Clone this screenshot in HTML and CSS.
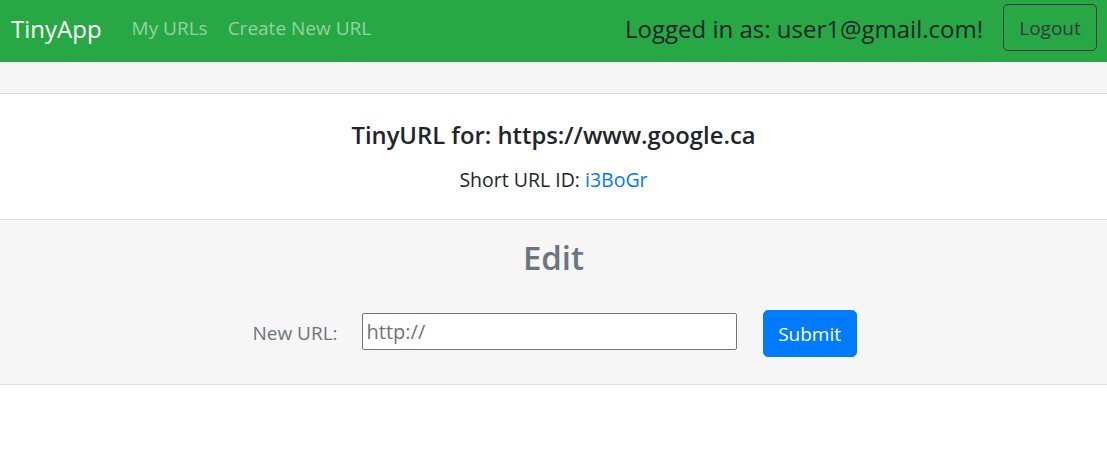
FILE: index.html
```html
<!DOCTYPE html>
<html>
<head>
<meta charset="utf-8">
<title>TinyApp</title>
<link rel="stylesheet" href="styles.css">
</head>
<body>
<nav class="navbar">
  <div class="nav-left">
    <a class="brand" href="#">TinyApp</a>
    <a class="nav-link" href="#">My URLs</a>
    <a class="nav-link" href="#">Create New URL</a>
  </div>
  <div class="nav-right">
    <span class="login-text">Logged in as: user1@gmail.com!</span>
    <button class="btn-logout">Logout</button>
  </div>
</nav>
<div class="card">
  <div class="card-header"></div>
  <div class="card-body">
    <h5 class="card-title">TinyURL for: https://www.google.ca</h5>
    <p class="card-text">Short URL ID: <a href="#">i3BoGr</a></p>
  </div>
  <div class="card-footer">
    <h2 class="edit-title">Edit</h2>
    <form class="edit-form">
      <label class="form-label">New URL:</label>
      <input class="url-input" type="text" value="http://">
      <button class="btn-submit" type="button">Submit</button>
    </form>
  </div>
</div>
</body>
</html>
```
FILE: styles.css
```css
* { box-sizing: border-box; }
body {
  margin: 0;
  font-family: "Open Sans", "Noto Sans", sans-serif;
  color: #212529;
  background: #fff;
}
.navbar {
  height: 62px;
  background: #28a745;
  display: flex;
  align-items: center;
  justify-content: space-between;
  padding: 0 10px 0 11px;
}
.nav-left { display: flex; align-items: center; }
.brand {
  color: #fff;
  font-size: 24px;
  text-decoration: none;
  margin-right: 30px;
  margin-top: -6px;
}
.nav-link {
  color: rgba(255,255,255,.5);
  font-size: 19px;
  text-decoration: none;
  margin-right: 20px;
  margin-top: -6px;
}
.nav-right { display: flex; align-items: center; }
.login-text {
  font-size: 24px;
  color: #212529;
  margin-right: 20px;
  margin-top: -6px;
}
.btn-logout {
  width: 94px;
  height: 47px;
  margin-top: -7px;
  background: transparent;
  border: 1px solid #343a40;
  border-radius: 5px;
  color: #343a40;
  font-family: inherit;
  font-size: 19px;
  padding: 0;
}
.card { border-bottom: 1px solid #dcdcdc; }
.card-header {
  height: 32px;
  background: #f6f6f6;
  border-bottom: 1px solid #dcdcdc;
}
.card-body {
  height: 126px;
  text-align: center;
  padding-top: 25px;
  border-bottom: 1px solid #dcdcdc;
}
.card-title {
  margin: 0 0 15px;
  font-size: 23.8px;
  font-weight: 600;
}
.card-text { margin: 0; font-size: 19.5px; }
.card-text a { color: #007bff; text-decoration: none; }
.card-footer {
  height: 164px;
  background: #f6f6f6;
  text-align: center;
  padding-top: 18px;
}
.edit-title {
  margin: 0 0 32px;
  font-size: 33px;
  font-weight: 600;
  color: #6c757d;
  line-height: 40px;
}
.edit-form {
  display: flex;
  align-items: center;
  justify-content: center;
  padding-left: 2px;
}
.form-label {
  font-size: 19px;
  color: #6c757d;
  margin-right: 24px;
  margin-bottom: 2px;
}
.url-input {
  width: 375px;
  height: 37px;
  border: 1px solid #767676;
  border-radius: 2px;
  font-family: inherit;
  font-size: 20px;
  color: #6c757d;
  padding: 0 4px;
  margin-right: 26px;
  margin-bottom: 5px;
}
.btn-submit {
  width: 94px;
  height: 47px;
  background: #007bff;
  color: #fff;
  border: 1px solid #007bff;
  border-radius: 5px;
  font-family: inherit;
  font-size: 19px;
  padding: 0;
}
```
